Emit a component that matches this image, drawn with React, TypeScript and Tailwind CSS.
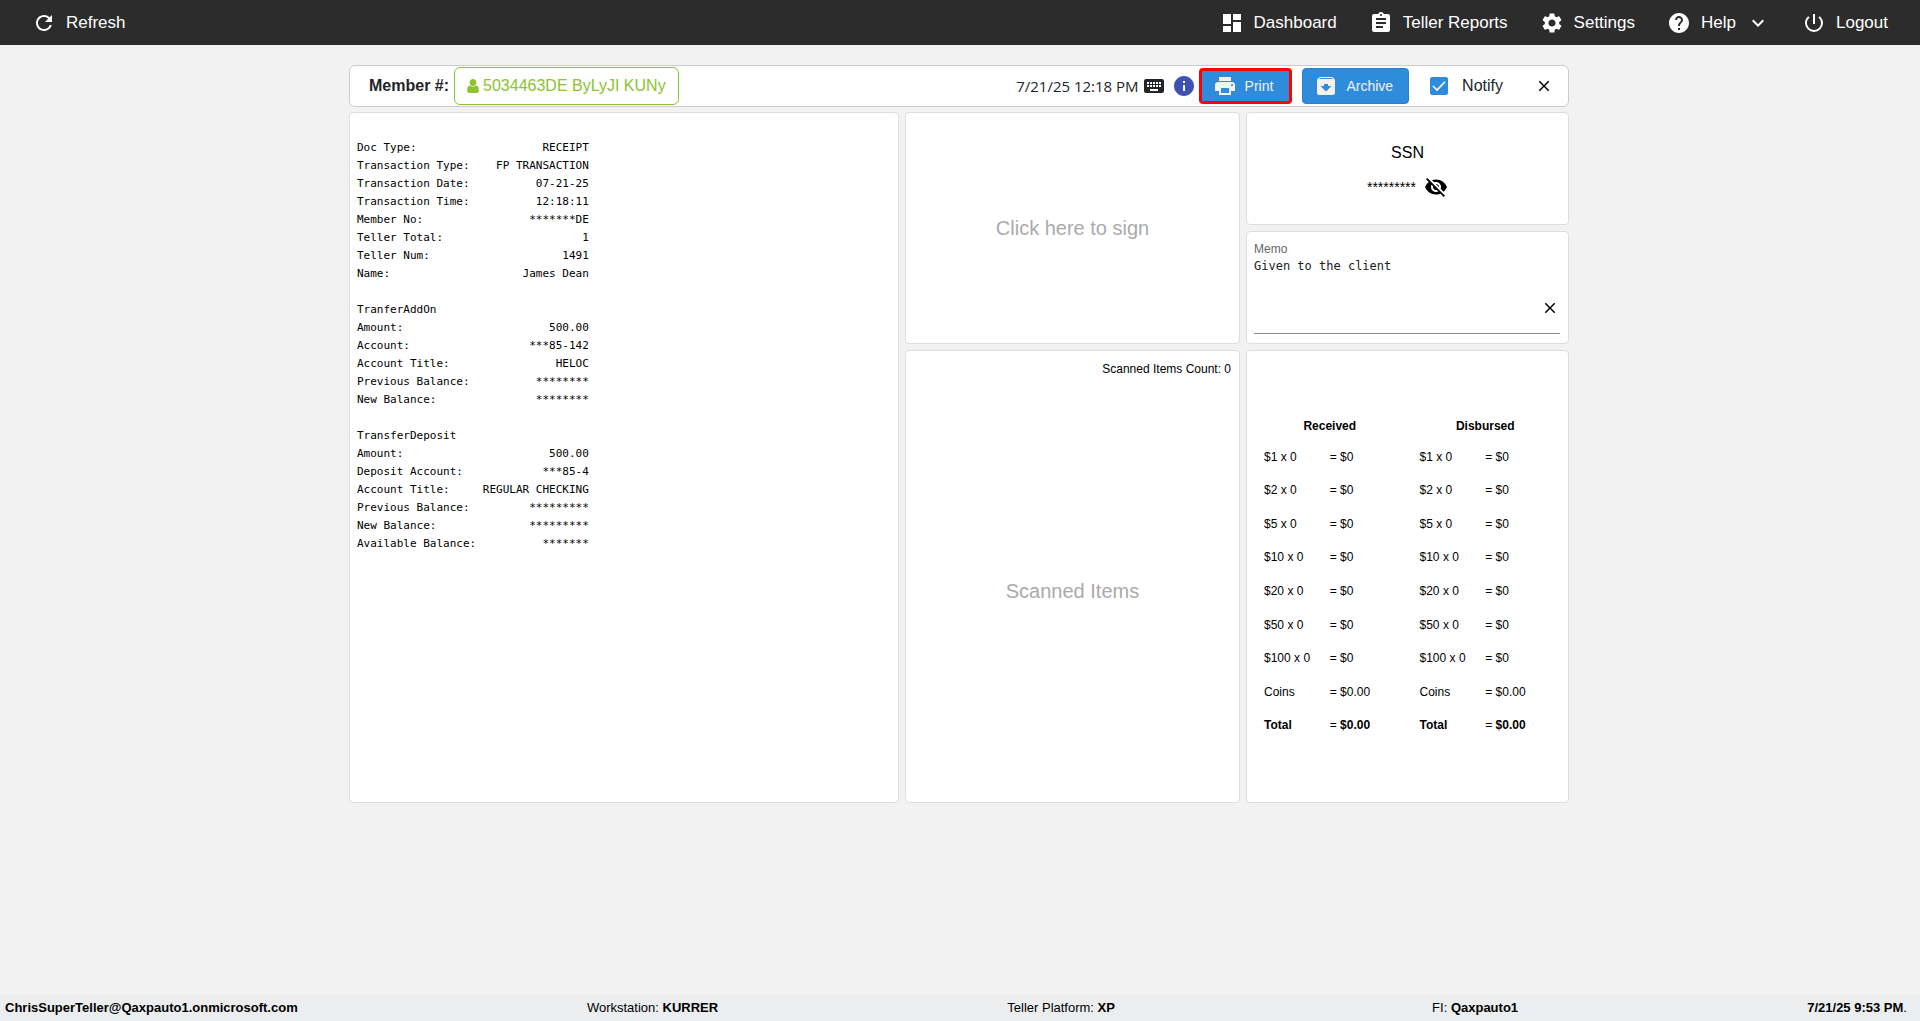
import { useState } from "react"
import type { ReactNode } from "react"
import {
    MdArchive,
    MdAssignment,
    MdClose,
    MdDashboard,
    MdExpandMore,
    MdHelp,
    MdInfo,
    MdKeyboard,
    MdPowerSettingsNew,
    MdPrint,
    MdRefresh,
    MdSettings,
    MdVisibilityOff,
} from "react-icons/md"

const RECEIPT_WIDTH = 35

const receipt: [string, string][] = [
    ["", ""],
    ["Doc Type:", "RECEIPT"],
    ["Transaction Type:", "FP TRANSACTION"],
    ["Transaction Date:", "07-21-25"],
    ["Transaction Time:", "12:18:11"],
    ["Member No:", "*******DE"],
    ["Teller Total:", "1"],
    ["Teller Num:", "1491"],
    ["Name:", "James Dean"],
    ["", ""],
    ["TranferAddOn", ""],
    ["Amount:", "500.00"],
    ["Account:", "***85-142"],
    ["Account Title:", "HELOC"],
    ["Previous Balance:", "********"],
    ["New Balance:", "********"],
    ["", ""],
    ["TransferDeposit", ""],
    ["Amount:", "500.00"],
    ["Deposit Account:", "***85-4"],
    ["Account Title:", "REGULAR CHECKING"],
    ["Previous Balance:", "*********"],
    ["New Balance:", "*********"],
    ["Available Balance:", "*******"],
]

const receiptText = receipt
    .map(([label, value]) => label + value.padStart(RECEIPT_WIDTH - label.length))
    .join("\n")

const bills = [1, 2, 5, 10, 20, 50, 100]

function UserIcon() {
    return <svg viewBox="256 128 1280 1536" className="h-3.5 w-3 fill-current">
        <path d="M1536 1399q0 109-62.5 187t-150.5 78h-854q-88 0-150.5-78t-62.5-187q0-85 8.5-160.5t31.5-152 58.5-131 94-89 134.5-34.5q131 128 313 128t313-128q76 0 134.5 34.5t94 89 58.5 131 31.5 152 8.5 160.5zm-256-887q0 159-112.5 271.5t-271.5 112.5-271.5-112.5-112.5-271.5 112.5-271.5 271.5-112.5 271.5 112.5 112.5 271.5z" />
    </svg>
}

function NavItem({ icon, label, children }: { icon: ReactNode; label: string; children?: ReactNode }) {
    return <a href="#" className="flex items-center gap-2.5">
        {icon}
        {label}
        {children}
    </a>
}

function TopNav() {
    return <header className="flex h-[45px] items-center justify-between bg-[#2c2c2c] px-8 text-[17px] leading-6 text-white">
        <button type="button" className="flex items-center gap-2.5">
            <MdRefresh size={24} />
            Refresh
        </button>
        <nav className="flex items-center gap-8">
            <NavItem icon={<MdDashboard size={24} />} label="Dashboard" />
            <NavItem icon={<MdAssignment size={24} />} label="Teller Reports" />
            <NavItem icon={<MdSettings size={24} />} label="Settings" />
            <NavItem icon={<MdHelp size={24} />} label="Help">
                <MdExpandMore size={24} />
            </NavItem>
            <NavItem icon={<MdPowerSettingsNew size={24} />} label="Logout" />
        </nav>
    </header>
}

function MemberBar() {
    const [notify, setNotify] = useState(true)
    return <div className="flex h-[42px] items-center justify-between rounded-md border border-[#ccc] bg-white pl-[19px] pr-[15px] text-base text-[#212529]">
        <div className="flex items-center gap-[5px]">
            <span className="font-bold">Member #:</span>
            <button type="button" className="flex h-[38px] items-center gap-1 rounded-md border border-[#8cc331] px-3 text-[#8cc331]">
                <UserIcon />
                5034463DE ByLyJI KUNy
            </button>
        </div>
        <div className="flex items-center">
            <span className="font-['Open_Sans',sans-serif] text-[15px]">7/21/25 12:18 PM</span>
            <MdKeyboard size={24} className="ml-[3px]" />
            <MdInfo size={24} className="ml-1.5 text-[#3f51b5]" />
            <button type="button" className="ml-[3px] flex h-9 items-center gap-2 rounded border-3 border-[#f00] bg-[#2f8cdd] pl-[11px] pr-4 text-sm text-[#f2f2f2]">
                <MdPrint size={24} />
                Print
            </button>
            <button type="button" className="ml-2.5 flex h-9 items-center gap-2 rounded border border-[#2a80cb] bg-[#2f8cdd] pl-[11px] pr-[15px] text-sm text-[#f2f2f2]">
                <MdArchive size={24} />
                Archive
            </button>
            <label className="ml-[21px] flex items-center gap-3.5">
                <span className="grid size-[18px]">
                    <input
                        type="checkbox"
                        checked={notify}
                        onChange={(e) => setNotify(e.target.checked)}
                        className="peer col-start-1 row-start-1 size-[18px] appearance-none rounded-xs border border-[#2f8cdd] checked:bg-[#2f8cdd]"
                    />
                    <svg viewBox="0 0 18 18" className="pointer-events-none col-start-1 row-start-1 size-[18px] fill-none stroke-white stroke-[1.6] opacity-0 peer-checked:opacity-100">
                        <path d="M3 9 L7 13 L15 4.8" />
                    </svg>
                </span>
                Notify
            </label>
            <button type="button" aria-label="Close" className="ml-8 text-black">
                <MdClose size={18} />
            </button>
        </div>
    </div>
}

function Panel({ className, children }: { className?: string; children: ReactNode }) {
    return <section className={`rounded border border-[#ddd] bg-white ${className ?? ""}`}>{children}</section>
}

function CashTable({ title }: { title: string }) {
    return <table className="h-[331px] w-full table-fixed text-left text-xs text-black">
        <thead>
            <tr className="h-[29px]">
                <th colSpan={2} className="text-center font-bold">{title}</th>
            </tr>
        </thead>
        <tbody>
            {bills.map((bill) => <tr key={bill}>
                <td>${bill} x 0</td>
                <td>= $0</td>
            </tr>)}
            <tr>
                <td>Coins</td>
                <td>= $0.00</td>
            </tr>
            <tr>
                <td className="font-bold">Total</td>
                <td>= <b>$0.00</b></td>
            </tr>
        </tbody>
    </table>
}

function StatusBar() {
    return <footer className="flex h-[26px] items-center justify-between bg-[#ebedef] px-[5px] text-[13px] text-black">
        <b>ChrisSuperTeller@Qaxpauto1.onmicrosoft.com</b>
        <span>Workstation: <b>KURRER</b></span>
        <span className="mr-7">Teller Platform: <b>XP</b></span>
        <span>FI: <b>Qaxpauto1</b></span>
        <span className="pr-2"><b>7/21/25 9:53 PM</b>.</span>
    </footer>
}

export default function App() {
    const [memo, setMemo] = useState("Given to the client")
    return <div className="flex min-h-screen flex-col bg-[#f2f2f2] font-['Liberation_Sans',Arial,sans-serif]">
        <TopNav />
        <main className="grow pr-0.5 pt-5">
            <div className="mx-auto flex max-w-[1220px] flex-col gap-[5px]">
                <MemberBar />
                <div className="grid grid-cols-[550fr_335fr_323fr] grid-rows-[minmax(232px,auto)_minmax(453px,auto)] gap-1.5">
                    <Panel className="row-span-2 px-[7px] py-2">
                        <pre className="font-['DejaVu_Sans_Mono',monospace] text-[11px] leading-[18px] text-black">{receiptText}</pre>
                    </Panel>
                    <Panel className="grid">
                        <button type="button" className="text-xl text-[#aaa]">Click here to sign</button>
                    </Panel>
                    <div className="grid grid-rows-2 gap-1.5">
                        <Panel className="flex flex-col items-center justify-center gap-2.5 pt-0.5 text-black">
                            <h2 className="text-base">SSN</h2>
                            <div className="flex items-center gap-2 text-sm">
                                *********
                                <button type="button" aria-label="Show SSN">
                                    <MdVisibilityOff size={24} />
                                </button>
                            </div>
                        </Panel>
                        <Panel className="flex flex-col pb-[9px] pl-[7px] pr-2 pt-[9px]">
                            <label htmlFor="memo" className="text-xs text-[#666]">Memo</label>
                            <div className="flex grow border-b border-[#888]">
                                <textarea
                                    id="memo"
                                    value={memo}
                                    onChange={(e) => setMemo(e.target.value)}
                                    className="grow resize-none font-['DejaVu_Sans_Mono',monospace] text-xs leading-[18px] text-[#212121] outline-none"
                                />
                                <button type="button" aria-label="Clear memo" className="mr-px self-end pb-4 text-black" onClick={() => setMemo("")}>
                                    <MdClose size={18} />
                                </button>
                            </div>
                        </Panel>
                    </div>
                    <Panel className="flex flex-col px-2 py-2.5">
                        <p className="text-right text-xs text-black">Scanned Items Count: 0</p>
                        <div className="grid grow place-items-center pt-3 text-xl text-[#aaa]">Scanned Items</div>
                    </Panel>
                    <Panel className="grid grid-cols-2 content-center gap-6 px-[17px]">
                        <CashTable title="Received" />
                        <CashTable title="Disbursed" />
                    </Panel>
                </div>
            </div>
        </main>
        <StatusBar />
    </div>
}
